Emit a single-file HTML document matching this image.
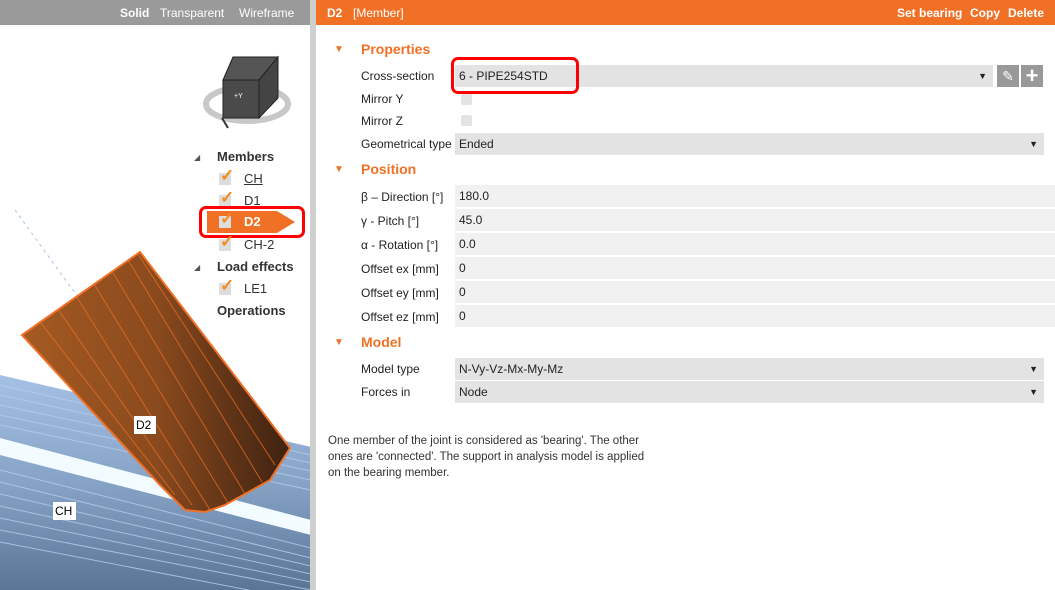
<!DOCTYPE html>
<html><head><meta charset="utf-8"><style>
*{margin:0;padding:0;box-sizing:border-box}
body{width:1055px;height:590px;overflow:hidden;background:#fff;font-family:"Liberation Sans",sans-serif;font-size:12px;color:#222;position:relative}
.a{position:absolute}
.lbl{position:absolute;left:361px;font-size:12px;color:#222}
.fld{position:absolute;left:455px;right:0;height:22px;background:#f1f1f1;padding-left:4px;line-height:22px;font-size:12px}
.dd{background:#e3e3e3}
.dd:after{content:"▼";position:absolute;right:6px;top:0;font-size:9px}
.sec{position:absolute;left:361px;color:#f07126;font-weight:bold;font-size:14px}
.tri{position:absolute;left:334px;color:#f07126;font-size:10px}
.cb{position:absolute;left:461px;width:11px;height:11px;background:#e3e3e3;border-radius:2px}
.tree{position:absolute;font-size:13px;color:#333}
.ck{position:absolute;width:12px;height:12px;background:#ddd;}
.ck:after{content:"✓";position:absolute;left:1px;top:-7px;color:#f58a1f;font-weight:bold;font-size:17px}
</style></head><body>
<svg class="a" style="left:0;top:25px" width="311" height="565" viewBox="0 25 311 565">
<defs>
<linearGradient id="ch" x1="0" y1="0" x2="0" y2="1"><stop offset="0" stop-color="#a4c0e4"/><stop offset=".5" stop-color="#86a3c6"/><stop offset="1" stop-color="#5a7596"/></linearGradient>
<linearGradient id="pp" x1="0" y1="0" x2="1" y2="0"><stop offset="0" stop-color="#a55a22"/><stop offset=".5" stop-color="#8a4a1e"/><stop offset="1" stop-color="#3e2211"/></linearGradient>
</defs>
<line x1="15" y1="210" x2="80" y2="300" stroke="#a9c4e6" stroke-dasharray="3,4"/>
<polygon points="0,375 311,447 311,590 0,590" fill="url(#ch)"/>
<polygon points="0,438 311,520 311,535 0,455" fill="#f2fbff"/>
<g stroke="#b7cdec" stroke-width="1" opacity=".8">
<line x1="0" y1="385" x2="311" y2="455"/><line x1="0" y1="395" x2="311" y2="463"/><line x1="0" y1="405" x2="311" y2="471"/><line x1="0" y1="415" x2="311" y2="480"/><line x1="0" y1="425" x2="311" y2="490"/>
<line x1="0" y1="470" x2="311" y2="548"/><line x1="0" y1="482" x2="311" y2="558"/><line x1="0" y1="494" x2="311" y2="566"/><line x1="0" y1="506" x2="311" y2="574"/><line x1="0" y1="518" x2="311" y2="582"/><line x1="0" y1="530" x2="311" y2="590"/><line x1="0" y1="542" x2="300" y2="600"/>
</g>
<polygon points="22,335 140,252 290,448 270,480 225,505 205,512 185,510 160,485" fill="url(#pp)" stroke="#f07126" stroke-width="2"/>
<g stroke="#f07126" stroke-width="1" opacity=".7">
<line x1="40" y1="322" x2="175" y2="495"/><line x1="58" y1="309" x2="192" y2="505"/><line x1="76" y1="296" x2="210" y2="510"/><line x1="94" y1="284" x2="228" y2="503"/><line x1="112" y1="271" x2="245" y2="494"/><line x1="128" y1="260" x2="262" y2="482"/>
<line x1="138" y1="254" x2="275" y2="465"/>
</g>
<rect x="134" y="416" width="22" height="18" fill="#fff"/><text x="136" y="429" font-size="12" font-family="Liberation Sans">D2</text>
<rect x="53" y="502" width="23" height="18" fill="#fff"/><text x="55" y="515" font-size="12" font-family="Liberation Sans">CH</text>
<ellipse cx="247" cy="104" rx="41" ry="17" fill="none" stroke="#c8c8c8" stroke-width="6"/>
<polygon points="223,80 233,57 278,57 259,80" fill="#555" stroke="#222"/>
<polygon points="259,80 278,57 278,98 259,118" fill="#444" stroke="#222"/>
<polygon points="223,80 259,80 259,118 223,118" fill="#4a4a4a" stroke="#222"/>
<text x="234" y="98" fill="#fff" font-size="7">+Y</text>
<line x1="222" y1="118" x2="228" y2="128" stroke="#333" stroke-width="2"/>
</svg>
<div class="a" style="left:0;top:0;width:311px;height:25px;background:#9a9a9a"></div>
<div class="a" style="left:120px;top:6px;color:#fff;font-size:12px;font-weight:bold">Solid</div>
<div class="a" style="left:160px;top:6px;color:#fff;font-size:12px">Transparent</div>
<div class="a" style="left:239px;top:6px;color:#fff;font-size:12px">Wireframe</div>
<div class="a" style="left:310px;top:0;width:6px;height:590px;background:#cfcfcf"></div>
<div class="a" style="left:194px;top:153px;font-size:8px;color:#555">◢</div>
<div class="tree" style="left:217px;top:149px;font-weight:bold">Members</div>
<div class="ck" style="left:219px;top:173px"></div><div class="tree" style="left:244px;top:171px;text-decoration:underline">CH</div>
<div class="ck" style="left:219px;top:195px"></div><div class="tree" style="left:244px;top:193px">D1</div>
<svg class="a" style="left:207px;top:211px" width="90" height="22"><polygon points="0,0 70,0 88,11 70,22 0,22" fill="#f07126"/></svg>
<div class="ck" style="left:219px;top:216px"></div><div class="tree" style="left:244px;top:214px;color:#fff;font-weight:bold">D2</div>
<div class="a" style="left:199px;top:206px;width:106px;height:32px;border:3px solid #f00;border-radius:7px"></div>
<div class="ck" style="left:219px;top:239px"></div><div class="tree" style="left:244px;top:237px">CH-2</div>
<div class="a" style="left:194px;top:263px;font-size:8px;color:#555">◢</div>
<div class="tree" style="left:217px;top:259px;font-weight:bold">Load effects</div>
<div class="ck" style="left:219px;top:283px"></div><div class="tree" style="left:244px;top:281px">LE1</div>
<div class="tree" style="left:217px;top:303px;font-weight:bold">Operations</div>
<div class="a" style="left:316px;top:0;width:739px;height:25px;background:#f07126;color:#fff"></div>
<div class="a" style="left:327px;top:6px;color:#fff;font-weight:bold">D2</div>
<div class="a" style="left:353px;top:6px;color:#fff">[Member]</div>
<div class="a" style="left:897px;top:6px;color:#fff;font-weight:bold">Set bearing</div>
<div class="a" style="left:970px;top:6px;color:#fff;font-weight:bold">Copy</div>
<div class="a" style="left:1008px;top:6px;color:#fff;font-weight:bold">Delete</div>
<div class="tri" style="top:44px">▼</div><div class="sec" style="top:41px">Properties</div>
<div class="lbl" style="top:69px">Cross-section</div>
<div class="fld dd" style="top:65px;right:62px">6 - PIPE254STD</div>
<div class="a" style="left:451px;top:57px;width:128px;height:37px;border:3px solid #f00;border-radius:7px"></div>
<div class="a" style="left:997px;top:65px;width:22px;height:22px;background:#999;color:#fff;text-align:center;line-height:22px;font-size:14px">✎</div>
<div class="a" style="left:1021px;top:65px;width:22px;height:22px;background:#999;color:#fff;text-align:center;line-height:21px;font-size:22px;font-weight:bold">+</div>
<div class="lbl" style="top:92px">Mirror Y</div><div class="cb" style="top:94px"></div>
<div class="lbl" style="top:114px">Mirror Z</div><div class="cb" style="top:115px"></div>
<div class="lbl" style="top:137px">Geometrical type</div>
<div class="fld dd" style="top:133px;right:11px">Ended</div>
<div class="tri" style="top:164px">▼</div><div class="sec" style="top:161px">Position</div>
<div class="lbl" style="top:190px">β – Direction [°]</div><div class="fld" style="top:185px">180.0</div>
<div class="lbl" style="top:214px">γ - Pitch [°]</div><div class="fld" style="top:209px">45.0</div>
<div class="lbl" style="top:238px">α - Rotation [°]</div><div class="fld" style="top:233px">0.0</div>
<div class="lbl" style="top:262px">Offset ex [mm]</div><div class="fld" style="top:257px">0</div>
<div class="lbl" style="top:286px">Offset ey [mm]</div><div class="fld" style="top:281px">0</div>
<div class="lbl" style="top:310px">Offset ez [mm]</div><div class="fld" style="top:305px">0</div>
<div class="tri" style="top:337px">▼</div><div class="sec" style="top:334px">Model</div>
<div class="lbl" style="top:362px">Model type</div><div class="fld dd" style="top:358px;right:11px">N-Vy-Vz-Mx-My-Mz</div>
<div class="lbl" style="top:385px">Forces in</div><div class="fld dd" style="top:381px;right:11px">Node</div>
<div class="a" style="left:328px;top:433px;width:332px;font-size:11.5px;line-height:16px;color:#333">One member of the joint is considered as 'bearing'. The other ones are 'connected'. The support in analysis model is applied on the bearing member.</div>
</body></html>
